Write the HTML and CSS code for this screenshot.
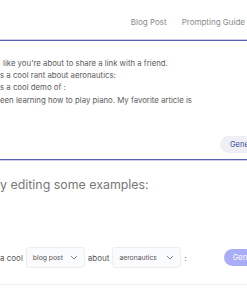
FILE: index.html
```html
<!DOCTYPE html>
<html lang="en">
<head>
    <meta charset="UTF-8">
    <meta name="viewport" content="width=device-width, initial-scale=1.0">
    <title>Prompt Playground</title>
    <link rel="stylesheet" href="styles.css">
</head>
<body>
    <nav class="top-nav">
        <a href="#" class="nav-link">Blog Post</a>
        <a href="#" class="nav-link">Prompting Guide</a>
    </nav>

    <div class="prompt-box">
        <div class="prompt-text">
            <p class="first"> like you're about to share a link with a friend.</p>
            <p>s a cool rant about aeronautics:</p>
            <p>s a cool demo of :</p>
            <p>een learning how to play piano. My favorite article is</p>
        </div>
        <div class="prompt-actions">
            <button class="btn-soft">Generate</button>
        </div>
    </div>

    <h2 class="section-title">y editing some examples:</h2>

    <div class="example-row">
        <span>a cool</span>
        <div class="select-box wide">blog post <span class="chev"><svg width="8" height="5" viewBox="0 0 8 5"><path d="M1 1l3 3 3-3" fill="none" stroke="#888" stroke-width="1"/></svg></span></div>
        <span>about</span>
        <div class="select-box wider">aeronautics <span class="chev"><svg width="8" height="5" viewBox="0 0 8 5"><path d="M1 1l3 3 3-3" fill="none" stroke="#888" stroke-width="1"/></svg></span></div>
        <span>:</span>
        <button class="btn-primary">Generate</button>
    </div>
</body>
</html>
```

FILE: styles.css
```css
body {
    margin: 0;
    width: 247px;
    height: 296px;
    overflow: hidden;
    font-family: Inter, "Liberation Sans", sans-serif;
    background-color: #fff;
    color: #555;
}
.top-nav {
    height: 40px;
    display: flex;
    justify-content: flex-end;
    align-items: center;
    gap: 15px;
    padding-right: 2px;
    box-sizing: border-box;
    padding-top: 3px;
}
.nav-link {
    font-size: 8px;
    color: #8a8a8a;
    text-decoration: none;
    white-space: nowrap;
}
.prompt-box {
    height: 120px;
    border-top: 1px solid #5a63b3;
    border-bottom: 1px solid #5a63b3;
    box-shadow: 0 -1px 0 #c9cdee, 0 1px 0 #c9cdee;
    box-sizing: border-box;
    display: flex;
    flex-direction: column;
    justify-content: space-between;
    padding: 16px 0 6px;
}
.prompt-text p {
    margin: 0;
    font-size: 7.8px;
    line-height: 12.2px;
    color: #5c5c5c;
    white-space: nowrap;
}
.prompt-text p.first {
    padding-left: 3px;
}
.prompt-actions {
    display: flex;
    justify-content: flex-end;
    margin-right: -30px;
}
.btn-soft {
    background-color: #eef0f5;
    color: #3b4699;
    border: none;
    border-radius: 9px;
    height: 17px;
    width: 57px;
    font-family: inherit;
    font-size: 7.5px;
    padding: 0 0 0 10px;
    text-align: left;
}
.section-title {
    margin: 17px 0 0;
    font-size: 12.4px;
    font-weight: 400;
    color: #777;
    line-height: 16px;
    white-space: nowrap;
}
.example-row {
    margin-top: 54px;
    display: flex;
    align-items: center;
    font-size: 8px;
    color: #555;
    white-space: nowrap;
    padding-bottom: 16px;
    border-bottom: 1px solid #eee;
    margin-right: -40px;
}
.select-box {
    flex-shrink: 0;
    height: 21px;
    box-sizing: border-box;
    border: 1px solid #eceef3;
    background-color: #fafbfd;
    border-radius: 3px;
    display: flex;
    align-items: center;
    justify-content: space-between;
    padding: 0 6px 0 6px;
    font-size: 6.8px;
    color: #555;
    margin: 0 3px;
}
.select-box.wide {
    width: 59px;
}
.select-box.wider {
    width: 69px;
}
.chev {
    display: flex;
}
.btn-primary {
    flex-shrink: 0;
    margin-left: 37px;
    background-color: #a9acf6;
    color: #fff;
    border: none;
    border-radius: 9px;
    height: 17px;
    width: 57px;
    font-family: inherit;
    font-size: 7.5px;
    padding: 0 0 0 9px;
    text-align: left;
}
```
